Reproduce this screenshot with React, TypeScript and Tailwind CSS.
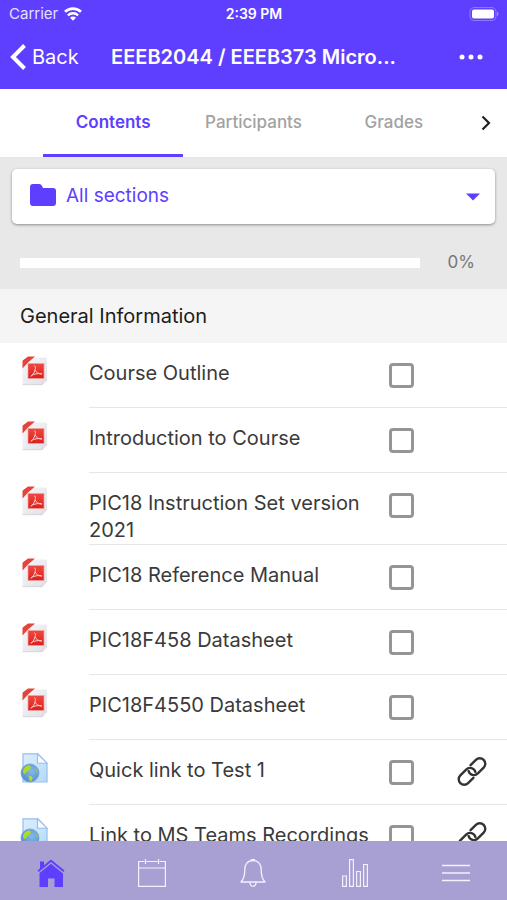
import React, { useState } from 'react';

type Item = {
  title: string;
  kind: 'pdf' | 'url';
};

const items: Item[] = [
  { title: 'Course Outline', kind: 'pdf' },
  { title: 'Introduction to Course', kind: 'pdf' },
  { title: 'PIC18 Instruction Set version 2021', kind: 'pdf' },
  { title: 'PIC18 Reference Manual', kind: 'pdf' },
  { title: 'PIC18F458 Datasheet', kind: 'pdf' },
  { title: 'PIC18F4550 Datasheet', kind: 'pdf' },
  { title: 'Quick link to Test 1', kind: 'url' },
  { title: 'Link to MS Teams Recordings', kind: 'url' },
];

const tabs = ['Contents', 'Participants', 'Grades'];

function PdfIcon() {
  return (
    <svg viewBox="0 0 28 30" className="w-7 h-[30px]" aria-hidden="true">
      <defs>
        <linearGradient id="pdf-sheet" x1="0" y1="0" x2="1" y2="1">
          <stop offset="0" stopColor="#f7f7f9" />
          <stop offset="1" stopColor="#dfe1e7" />
        </linearGradient>
        <linearGradient id="pdf-red" x1="0" y1="0" x2="0" y2="1">
          <stop offset="0" stopColor="#f0483f" />
          <stop offset="1" stopColor="#dc1f1c" />
        </linearGradient>
      </defs>
      <path d="M12 1.500H25.500q1.500 0 1.500 1.500V23.500l-5 5.500H3.500Q2.500 29 2.500 27.500V11z" fill="url(#pdf-sheet)" />
      <path d="M2.500 28.700H22" stroke="#cfd1d6" strokeWidth=".8" />
      <path d="M27 23.500l-5 5.500 .5-3.800q.2-1 1.200-1z" fill="#f6dfe4" stroke="#cfd0d8" strokeWidth=".5" />
      <path d="M8 .5H15L8 6.500 2.500 12.500V5.500Q2.500 4.800 3 4.300z" fill="#e4443c" />
      <rect x="8" y="7.500" width="16" height="15" fill="url(#pdf-red)" stroke="#f6a29c" strokeWidth=".7" />
      <path
        d="M14.500 10c1.300-.4 1.100 2.200.5 4.300-.8 2.400-2.500 5.200-4 6M15 14.200c1.100 2 3 3.500 6.500 4M11.500 19.400c2.500-1.400 6.300-2.200 9.800-1.800"
        fill="none"
        stroke="#fbd0cc"
        strokeWidth="1"
        strokeLinecap="round"
      />
    </svg>
  );
}

function UrlIcon() {
  return (
    <svg viewBox="0 0 28 30" className="w-7 h-[30px]" aria-hidden="true">
      <defs>
        <linearGradient id="url-sheet" x1="0" y1="0" x2="1" y2="1">
          <stop offset="0" stopColor="#dcf0fd" />
          <stop offset="1" stopColor="#b5d9f8" />
        </linearGradient>
        <radialGradient id="url-globe" cx=".6" cy=".4" r=".7">
          <stop offset="0" stopColor="#82b9ee" />
          <stop offset="1" stopColor="#5687c9" />
        </radialGradient>
      </defs>
      <path d="M3 .8H18l9 9.400V29H3z" fill="url(#url-sheet)" stroke="#96bdf0" strokeWidth="1.200" />
      <path d="M17.500 .8V10.200H27z" fill="#f5fbff" stroke="#96bdf0" strokeWidth="1.100" />
      <circle cx="10" cy="20" r="9" fill="url(#url-globe)" stroke="#6f9fdb" strokeWidth=".8" />
      <path d="M3 18c.5-3.500 3.500-5.500 7-5.500l1 2-1.500 2.500-2.500 1.500L5.500 21l-2-.5z" fill="#aedb22" />
      <path d="M8.500 22.500l3 .8 1.300 1.900-1.500 3.100-1.800-.8z" fill="#b4dc2c" />
      <path d="M15 14.500l2.500 2.500.6 3-1.600-.5-1.500-2.500z" fill="#8fc656" />
    </svg>
  );
}

function LinkIcon() {
  return (
    <svg viewBox="0 0 32 32" className="w-8 h-8" fill="none" stroke="#333" strokeWidth="2.400" strokeLinecap="round" aria-hidden="true">
      <g transform="translate(16 15.500) rotate(-45)">
        <path d="M-3.500 5.500H-11a5.500 5.500 0 0 1 0-11H-2.800A5.500 5.500 0 0 1 2 2.800" />
        <path d="M3.500 -5.500H11a5.500 5.500 0 0 1 0 11H2.800A5.500 5.500 0 0 1 -2 -2.800" />
      </g>
    </svg>
  );
}

function StatusBar() {
  return (
    <div className="grid grid-cols-3 items-center h-7 pl-[9px] pr-2 text-[15px]">
      <div className="flex items-center gap-1.5 text-[#e6e0ff]">
        <span>Carrier</span>
        <svg viewBox="0 0 18 14" className="w-[18px] h-3.5" fill="none" stroke="#fff" aria-hidden="true">
          <path d="M1 4.800a11.600 11.600 0 0 1 16 0" strokeWidth="2.600" />
          <path d="M3.900 8.300a7.500 7.500 0 0 1 10.200 0" strokeWidth="2.400" />
          <path d="M9 13.800L6 10.800a4.200 4.200 0 0 1 6 0z" fill="#fff" stroke="none" />
        </svg>
      </div>
      <div className="text-center text-sm font-semibold">2:39 PM</div>
      <svg viewBox="0 0 30 14" className="w-[30px] h-3.5 justify-self-end" aria-hidden="true">
        <rect x="1" y=".5" width="26" height="13" rx="4" fill="none" stroke="#8d79ff" />
        <rect x="3" y="2.500" width="22" height="9" rx="2" fill="#fff" />
        <path d="M28 4.800q1.500.7 1.500 2.200T28 9.200z" fill="#9d8bff" />
      </svg>
    </div>
  );
}

function Row({ item }: { item: Item }) {
  const [done, setDone] = useState(false);
  const id = item.title.toLowerCase().replace(/\s+/g, '-');

  return (
    <li className="flex pl-5">
      <div className="w-[69px] shrink-0 pt-[13px]">
        {item.kind === 'pdf' ? <PdfIcon /> : <UrlIcon />}
      </div>
      <div className="flex flex-1 items-start min-h-[65px] border-b border-[#e6e6e6]">
        <label htmlFor={id} className="flex-1 pt-[17px] pr-5 text-xl leading-[27px] text-[#3a3a3a]">
          {item.title}
        </label>
        <input
          id={id}
          type="checkbox"
          checked={done}
          onChange={() => setDone(!done)}
          className="appearance-none shrink-0 mt-5 w-[25px] h-[25px] rounded-[4px] border-3 border-[#959595] bg-white checked:bg-[#5e3eff]"
        />
        <div className="w-[93px] shrink-0 pt-4 pl-[42px]">
          {item.kind === 'url' && (
            <a href="#open" aria-label={`Open ${item.title}`} className="block w-8">
              <LinkIcon />
            </a>
          )}
        </div>
      </div>
    </li>
  );
}

function BottomNav() {
  return (
    <nav className="grid grid-cols-5 h-[59px] shrink-0 bg-[#a8a0d2] pt-1">
      <a href="#home" aria-label="Home" className="flex items-center justify-center">
        <svg viewBox="0 0 28 28" className="w-7 h-7" fill="#5e3eff">
          <path d="M14 .5L27.500 11.500l-1.200 1.500L14 3 1.700 13 .5 11.500 3 9.400V2.500h4v3.700z" />
          <path d="M14 4.700l12 9.800V28h-8.500v-8.500h-6.500V28H2.500V14z" />
        </svg>
      </a>
      <a href="#calendar" aria-label="Calendar" className="flex items-center justify-center">
        <svg viewBox="0 0 28 28" className="w-7 h-7" fill="none" stroke="#f3f0ff" strokeWidth="1.200">
          <path d="M6.500 2.500H.6V27.400H27.400V2.500H21.500M8.500 2.500h11M.6 9H27.400M7.500 0v5M20.500 0v5" />
        </svg>
      </a>
      <a href="#notifications" aria-label="Notifications" className="flex items-center justify-center">
        <svg viewBox="0 0 28 28" className="w-7 h-7" fill="none" stroke="#f3f0ff" strokeWidth="1.300" strokeLinejoin="round">
          <path d="M14 1.500c-5.500 0-8.200 4-8.200 9 0 6-.8 9.500-3.800 12.500h24c-3-3-3.800-6.500-3.800-12.500 0-5-2.700-9-8.200-9z" />
          <path d="M12.300 1.500q0-1.200 1.700-1.200t1.700 1.200M10.800 23.300q.4 4 3.200 4t3.200-4" />
        </svg>
      </a>
      <a href="#progress" aria-label="Progress" className="flex items-center justify-center">
        <svg viewBox="0 0 28 28" className="w-7 h-7" fill="none" stroke="#f3f0ff" strokeWidth="1.200">
          <path d="M1.600 17h3.800v10.400H1.600zM8.600.6h3.800v26.800H8.600zM15.600 12.500h3.800v14.900h-3.800zM22.600 5.500h3.800v21.900h-3.800z" />
        </svg>
      </a>
      <button type="button" aria-label="More" className="flex items-center justify-center">
        <svg viewBox="0 0 28 28" className="w-7 h-7" stroke="#f3f0ff" strokeWidth="1.400">
          <path d="M0 6.500h28M0 14h28M0 21.500h28" />
        </svg>
      </button>
    </nav>
  );
}

export default function App() {
  const [active, setActive] = useState('Contents');

  return (
    <div className="flex flex-col h-screen bg-white font-['Inter',sans-serif] overflow-hidden">
      <header className="shrink-0 bg-[#5e3eff] text-white">
        <StatusBar />
        <div className="grid grid-cols-[1fr_auto_1fr] items-center h-[61px] px-2.5 pb-1">
          <button type="button" className="flex items-center gap-1.5 text-xl">
            <svg viewBox="0 0 16 26" className="w-4 h-[26px]" fill="none" stroke="#fff" strokeWidth="4" aria-hidden="true">
              <path d="M14.500 1.500L3 13l11.500 11.500" />
            </svg>
            Back
          </button>
          <h1 className="text-xl font-semibold whitespace-nowrap">EEEB2044 / EEEB373 Micro...</h1>
          <button type="button" aria-label="Options" className="justify-self-end pr-3.5">
            <svg viewBox="0 0 24 6" className="w-6 h-1.5" fill="#fff">
              <circle cx="3" cy="3" r="2.500" />
              <circle cx="12" cy="3" r="2.500" />
              <circle cx="21" cy="3" r="2.500" />
            </svg>
          </button>
        </div>
      </header>

      <div className="flex shrink-0 h-[68px] pl-[43px]">
        <div role="tablist" className="grid grid-cols-3 flex-1">
          {tabs.map((tab) => (
            <button
              key={tab}
              type="button"
              role="tab"
              aria-selected={active === tab}
              onClick={() => setActive(tab)}
              className={
                active === tab
                  ? 'border-b-3 border-[#5e3eff] pt-0.5 text-[#5e3eff] text-[17px] font-semibold'
                  : 'border-b-3 border-transparent pt-0.5 text-[#a2a2a2] text-[17px] font-medium'
              }
            >
              {tab}
            </button>
          ))}
        </div>
        <button type="button" aria-label="Next tabs" className="flex items-center justify-center w-[43px]">
          <svg viewBox="0 0 10 16" className="w-2.5 h-4" fill="none" stroke="#222" strokeWidth="2.200">
            <path d="M1.500 1.500L8 8l-6.500 6.500" />
          </svg>
        </button>
      </div>

      <main className="flex-1 min-h-0 overflow-hidden">
        <div className="h-[132px] bg-[#e8e8e8] px-3 pt-3">
          <div className="relative h-[55px]">
            <svg viewBox="0 0 26 22" className="absolute left-[18px] top-[15px] w-[26px] h-[22px]" fill="#5e3eff" aria-hidden="true">
              <path d="M3 0h6.500q1.500 0 2.200 1.500L13 4h10q3 0 3 3v12q0 3-3 3H3q-3 0-3-3V3q0-3 3-3z" />
            </svg>
            <select
              aria-label="Sections"
              className="appearance-none w-full h-full rounded-[5px] bg-white pl-[54px] pr-10 text-[19px] text-[#5e3eff] shadow-[0_1px_3px_rgba(0,0,0,0.4)]"
            >
              <option>All sections</option>
              <option>General Information</option>
            </select>
            <svg viewBox="0 0 14 8" className="absolute right-[15px] top-6 w-3.5 h-2 pointer-events-none" fill="#5e3eff" aria-hidden="true">
              <path d="M0 .5h14L7 7.500z" />
            </svg>
          </div>
          <div className="flex items-center h-[77px] pl-2 pr-5">
            <div
              role="progressbar"
              aria-label="Course progress"
              aria-valuenow={0}
              aria-valuemin={0}
              aria-valuemax={100}
              className="flex-1 h-2.5 bg-white"
            />
            <span className="w-[55px] text-right text-[17px] text-[#777]">0%</span>
          </div>
        </div>

        <h2 className="flex items-center h-[54px] px-5 bg-[#f5f5f5] text-xl text-[#1c1c1c]">General Information</h2>

        <ul>
          {items.map((item) => (
            <Row key={item.title} item={item} />
          ))}
        </ul>
      </main>

      <BottomNav />
    </div>
  );
}
